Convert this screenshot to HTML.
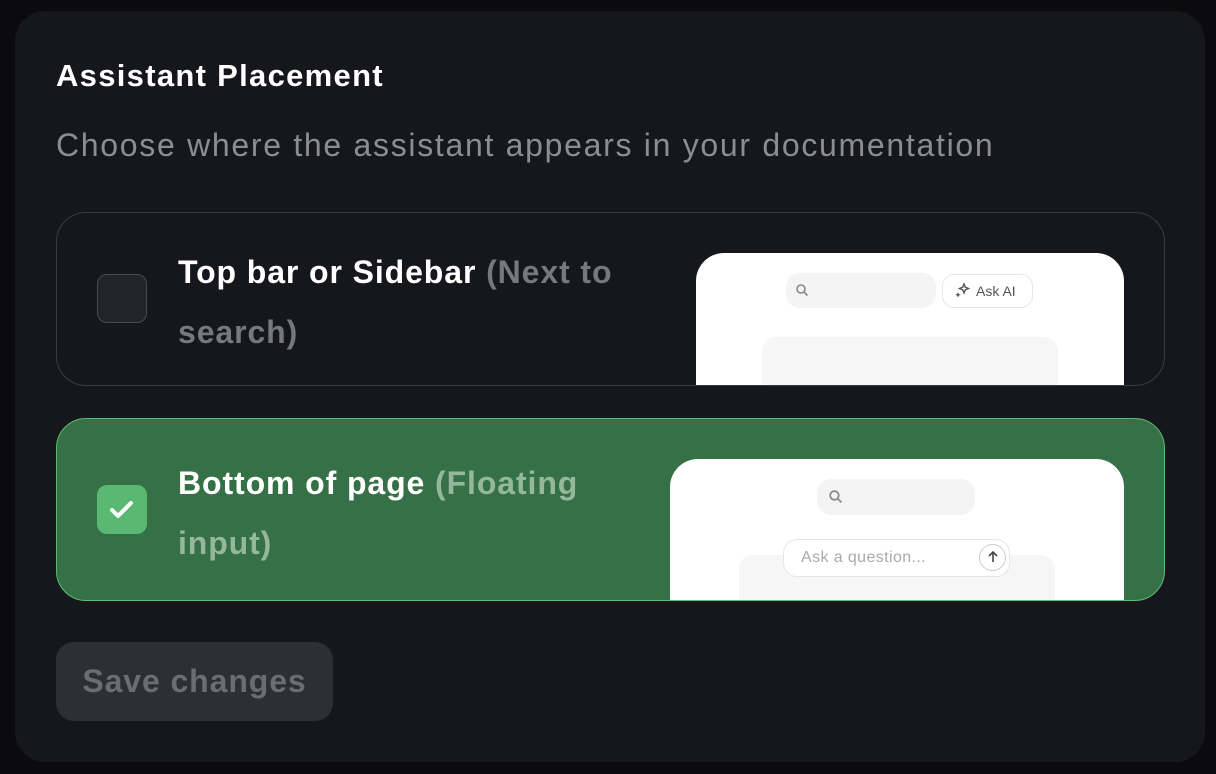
<!DOCTYPE html>
<html><head><style>
*{margin:0;padding:0;box-sizing:border-box}
body{width:1216px;height:774px;background:#0b0b0d;font-family:"Liberation Sans",sans-serif;position:relative;overflow:hidden}
.card{position:absolute;left:15px;top:11px;width:1190px;height:751px;background:#16171c;border-radius:30px}
.abs{position:absolute}
h1{position:absolute;left:56px;top:58px;font-size:31px;font-weight:600;color:#fff;letter-spacing:1.3px}
.sub{position:absolute;left:56px;top:127px;font-size:32px;color:#8c8d91;letter-spacing:1.7px}
.opt{position:absolute;left:56px;width:1109px;border-radius:30px;overflow:hidden}
.o1{top:212px;height:174px;border:1.5px solid #3a3b40;background:#16171c}
.o2{top:418px;height:183px;border:1.5px solid #5cbb70;background:#357046}
.cb{position:absolute;left:40px;width:50px;height:49px;border-radius:10px}
.lbl{position:absolute;left:121px;font-size:32px;font-weight:600;line-height:60px;color:#fff;width:470px;letter-spacing:0.9px}
.prev{position:absolute;background:#fff;border-radius:28px 28px 0 0;overflow:hidden}
.pill{position:absolute;background:#f4f4f5;border-radius:14px}
.btn{position:absolute;left:56px;top:642px;width:277px;height:79px;border-radius:18px;background:#2e2f34;color:#6c6d72;font-size:32px;font-weight:600;line-height:79px;text-align:center;letter-spacing:0.9px}
</style></head><body>
<div class="card"></div>
<h1>Assistant Placement</h1>
<div class="sub">Choose where the assistant appears in your documentation</div>

<div class="opt o1">
  <div class="cb" style="top:61px;background:#232429;border:1.5px solid #4a4b50"></div>
  <div class="lbl" style="top:29px">Top bar or Sidebar <span style="color:#77787c">(Next to search)</span></div>
  <div class="prev" style="left:639px;top:40px;width:428px;height:132px">
    <div class="pill" style="left:90px;top:20px;width:150px;height:35px">
      <svg class="abs" style="left:9px;top:10px" width="14" height="14" viewBox="0 0 14 14"><circle cx="6" cy="6" r="4" fill="none" stroke="#888" stroke-width="1.6"/><path d="M9 9l3.5 3.5" stroke="#888" stroke-width="1.6"/></svg>
    </div>
    <div class="abs" style="left:246px;top:21px;width:91px;height:34px;border:1px solid #e6e6e8;border-radius:12px;font-size:14px;color:#555;line-height:32px;padding-left:33px">Ask AI</div>
    <svg class="abs" style="left:257px;top:29px" width="18" height="18" viewBox="0 0 18 18"><path d="M11 2l1.3 3.2L15.5 6.5 12.3 7.8 11 11 9.7 7.8 6.5 6.5 9.7 5.2z" fill="none" stroke="#555" stroke-width="1.4"/><path d="M5 10l.8 2 2 .8-2 .8L5 15.6l-.8-2-2-.8 2-.8z" fill="#555"/></svg>
    <div class="pill" style="left:66px;top:84px;width:296px;height:60px;background:#f6f6f7"></div>
  </div>
</div>

<div class="opt o2">
  <div class="cb" style="top:66px;background:#5ab872"></div>
  <svg class="abs" style="left:50px;top:78px" width="30" height="26" viewBox="0 0 30 26"><path d="M5 13l6 6L24 6" fill="none" stroke="#fff" stroke-width="4" stroke-linecap="round" stroke-linejoin="round"/></svg>
  <div class="lbl" style="top:34px">Bottom of page <span style="color:#95b89c">(Floating input)</span></div>
  <div class="prev" style="left:613px;top:40px;width:454px;height:142px">
    <div class="pill" style="left:147px;top:20px;width:158px;height:36px">
      <svg class="abs" style="left:11px;top:10px" width="15" height="15" viewBox="0 0 14 14"><circle cx="6" cy="6" r="4" fill="none" stroke="#888" stroke-width="1.6"/><path d="M9 9l3.5 3.5" stroke="#888" stroke-width="1.6"/></svg>
    </div>
    <div class="pill" style="left:69px;top:96px;width:316px;height:60px;background:#f6f6f7"></div>
    <div class="abs" style="left:113px;top:80px;width:227px;height:38px;background:#fff;border:1px solid #e6e6e8;border-radius:14px;font-size:16px;color:#aaa;line-height:36px;padding-left:17px;letter-spacing:0.4px">Ask a question...</div>
    <div class="abs" style="left:309px;top:85px;width:27px;height:27px;border:1px solid #ccc;border-radius:50%"></div>
    <svg class="abs" style="left:316px;top:91px" width="14" height="14" viewBox="0 0 14 14"><path d="M7 12V2M3 6l4-4 4 4" fill="none" stroke="#444" stroke-width="1.6"/></svg>
  </div>
</div>

<div class="btn">Save changes</div>
</body></html>
